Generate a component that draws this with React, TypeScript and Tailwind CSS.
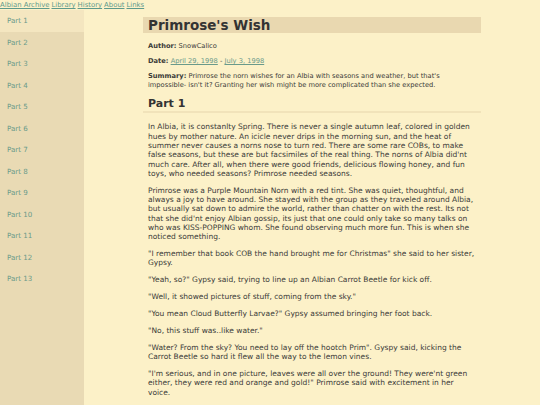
import React from 'react';

const parts = Array.from({ length: 13 }, (_, i) => `Part ${i + 1}`);

const paragraphs = [
  "In Albia, it is constanlty Spring. There is never a single autumn leaf, colored in golden hues by mother nature. An icicle never drips in the morning sun, and the heat of summer never causes a norns nose to turn red. There are some rare COBs, to make false seasons, but these are but facsimiles of the real thing. The norns of Albia did'nt much care. After all, when there were good friends, delicious flowing honey, and fun toys, who needed seasons? Primrose needed seasons.",
  "Primrose was a Purple Mountain Norn with a red tint. She was quiet, thoughtful, and always a joy to have around. She stayed with the group as they traveled around Albia, but usually sat down to admire the world, rather than chatter on with the rest. Its not that she did'nt enjoy Albian gossip, its just that one could only take so many talks on who was KISS-POPPING whom. She found observing much more fun. This is when she noticed something.",
  "\"I remember that book COB the hand brought me for Christmas\" she said to her sister, Gypsy.",
  "\"Yeah, so?\" Gypsy said, trying to line up an Albian Carrot Beetle for kick off.",
  "\"Well, it showed pictures of stuff, coming from the sky.\"",
  "\"You mean Cloud Butterfly Larvae?\" Gypsy assumed bringing her foot back.",
  "\"No, this stuff was..like water.\"",
  "\"Water? From the sky? You need to lay off the hootch Prim\". Gyspy said, kicking the Carrot Beetle so hard it flew all the way to the lemon vines.",
  "\"I'm serious, and in one picture, leaves were all over the ground! They were'nt green either, they were red and orange and gold!\" Primrose said with excitement in her voice.",
];

const App: React.FC = () => {
  return (
    <div className="min-h-[405px] bg-[#fcf1c8] text-[#3b3b38] font-['DejaVu_Sans',Verdana,sans-serif] text-[7.5px] leading-[9.3px]">
      {/* top nav */}
      <div className="h-[10px] flex gap-[2px] text-[6.9px] leading-[10px] text-[#5e9a8c]">
        {['Albian Archive', 'Library', 'History', 'About', 'Links'].map((l) => (
          <a key={l} href="#" className="underline">{l}</a>
        ))}
      </div>

      <div className="flex">
        {/* sidebar */}
        <div className="w-[84px] shrink-0 bg-[#e9dab4] min-h-[395px] text-[7.1px]">
          {parts.map((p, i) => (
            <div
              key={p}
              className={`h-[21.5px] flex items-center pl-[7px] text-[#6a9a8a] ${i === 0 ? 'bg-[#f4e6c0]' : ''}`}
            >
              {p}
            </div>
          ))}
        </div>

        {/* content */}
        <div className="ml-[59px] w-[338px] pt-[7px]">
          <h1 className="bg-[#e9d8b0] h-[16px] px-[5px] text-[13.5px] leading-[16px] font-bold text-[#333]">
            Primrose's Wish
          </h1>
          <div className="px-[5px] text-[6.7px] leading-[8.6px]">
            <p className="mt-[9px]"><b>Author:</b> SnowCalico</p>
            <p className="mt-[6.5px]">
              <b>Date:</b> <a href="#" className="underline text-[#6a9a8a]">April 29, 1998</a> -{' '}
              <a href="#" className="underline text-[#6a9a8a]">July 3, 1998</a>
            </p>
            <p className="mt-[6.5px] pr-[10px]">
              <b>Summary:</b> Primrose the norn wishes for an Albia with seasons and weather, but that's impossible- isn't it? Granting her wish might be more complicated than she expected.
            </p>
          </div>
          <h2 className="mt-[8px] px-[5px] text-[11px] leading-[13px] font-bold text-[#333] border-b-[2px] border-[#f1e3ba] pb-[1px]">
            Part 1
          </h2>
          <div className="px-[5px] pt-[9px] pr-[4px]">
            {paragraphs.map((t, i) => (
              <p key={i} className="mb-[7.6px]">{t}</p>
            ))}
          </div>
        </div>
      </div>
    </div>
  );
};

export default App;
